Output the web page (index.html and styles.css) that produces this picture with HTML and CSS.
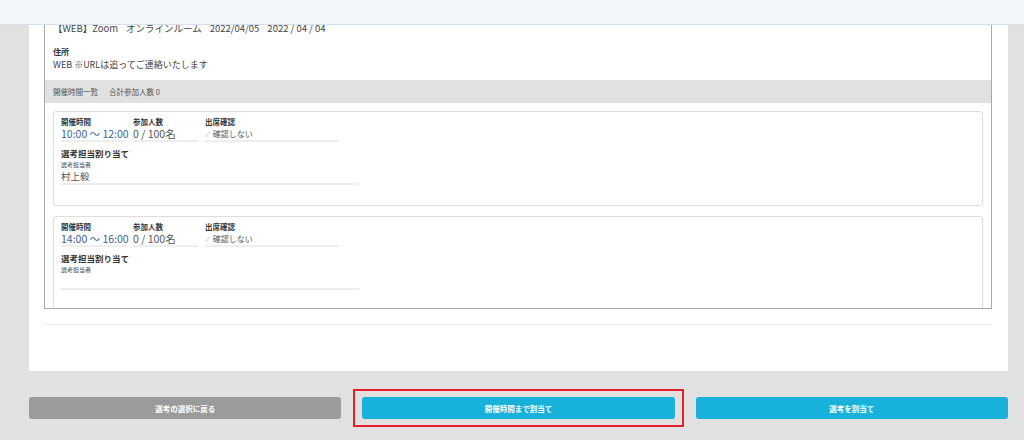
FILE: index.html
```html
<!DOCTYPE html>
<html lang="ja">
<head>
    <meta charset="UTF-8">
    <meta name="viewport" content="width=device-width, initial-scale=1.0">
    <title>選考担当割り当て</title>
    <link rel="stylesheet" href="styles.css">
</head>
<body>
    <!-- 固定ヘッダー -->
    <div class="topbar"></div>

    <div class="page">
        <div class="panel">
            <div class="scroll-box">
                <div class="info">
                    <p class="info-line info-head">
                        <span>【WEB】Zoom</span>
                        <span>オンラインルーム</span>
                        <span>2022/04/05</span>
                        <span>2022 / 04 / 04</span>
                    </p>
                    <p class="info-label">住所</p>
                    <p class="info-line">WEB ※URLは追ってご連絡いたします</p>
                </div>

                <div class="band">
                    <span>開催時間一覧</span>
                    <span>合計参加人数 0</span>
                </div>

                <div class="card-list">
                    <div class="card">
                        <div class="field-row">
                            <div class="field w-time">
                                <div class="label">開催時間</div>
                                <div class="value time">10:00 ～ 12:00</div>
                            </div>
                            <div class="field w-time">
                                <div class="label">参加人数</div>
                                <div class="value">0 / 100名</div>
                            </div>
                            <div class="field w-check">
                                <div class="label">出席確認</div>
                                <div class="value small"><span class="check">✓</span>確認しない</div>
                            </div>
                        </div>
                        <div class="assign-title">選考担当割り当て</div>
                        <div class="field w-assign">
                            <div class="sub-label">選考担当者</div>
                            <div class="value name">村上毅</div>
                        </div>
                    </div>

                    <div class="card">
                        <div class="field-row">
                            <div class="field w-time">
                                <div class="label">開催時間</div>
                                <div class="value time">14:00 ～ 16:00</div>
                            </div>
                            <div class="field w-time">
                                <div class="label">参加人数</div>
                                <div class="value">0 / 100名</div>
                            </div>
                            <div class="field w-check">
                                <div class="label">出席確認</div>
                                <div class="value small"><span class="check">✓</span>確認しない</div>
                            </div>
                        </div>
                        <div class="assign-title">選考担当割り当て</div>
                        <div class="field w-assign">
                            <div class="sub-label">選考担当者</div>
                            <div class="value name"></div>
                        </div>
                    </div>
                </div>
            </div>
            <div class="separator"></div>
        </div>

        <div class="actions">
            <button class="btn btn-gray">選考の選択に戻る</button>
            <div class="highlight">
                <button class="btn btn-blue">開催時間まで割当て</button>
            </div>
            <button class="btn btn-blue">選考を割当て</button>
        </div>
    </div>
</body>
</html>
```

FILE: styles.css
```css
/* 基本 */
body {
    margin: 0;
    background-color: #e1e1e1;
    font-family: "Noto Sans CJK JP", "Noto Sans", sans-serif;
    color: #444444;
}

p {
    margin: 0;
}

/* 固定ヘッダー */
.topbar {
    position: fixed;
    top: 0;
    left: 0;
    right: 0;
    height: 24px;
    background-color: #f1f7fb;
    border-bottom: 1px solid #d3dfec;
    z-index: 10;
}

.page {
    padding: 0 16px 21px 29px;
}

/* 白いパネル */
.panel {
    background-color: #ffffff;
    height: 371px;
    padding: 0 16px 0 15px;
    box-sizing: border-box;
}

.scroll-box {
    height: 309px;
    box-sizing: border-box;
    border: 1px solid #a9a9a9;
    border-top: none;
    overflow: hidden;
    padding-top: 20px;
}

.info {
    padding: 0 8px 7px;
}

.info-line {
    font-size: 9px;
    line-height: 16px;
    color: #444444;
}

.info-head {
    display: flex;
    gap: 8px;
    font-size: 9.5px;
}

.info-label {
    margin-top: 11px;
    font-size: 8px;
    line-height: 10px;
    font-weight: bold;
    color: #333333;
}

/* 開催時間一覧 */
.band {
    height: 23px;
    background-color: #e1e1e1;
    display: flex;
    align-items: center;
    gap: 11px;
    padding-left: 8px;
    font-size: 7.5px;
    color: #555555;
}

.card-list {
    padding: 8px 8px 0;
}

.card {
    border: 1px solid #dddddd;
    border-radius: 3px;
    padding: 5px 7px 20px;
    margin-bottom: 10px;
}

.field-row {
    display: flex;
    gap: 7px;
}

.field {
    border-bottom: 2px solid #eeeeee;
}

.w-time {
    width: 65px;
}

.w-check {
    width: 134px;
}

.w-assign {
    width: 298px;
}

.label {
    font-size: 7.5px;
    line-height: 10px;
    font-weight: bold;
    color: #333333;
}

.value {
    font-size: 10.5px;
    line-height: 13px;
    height: 13px;
    color: #555555;
    white-space: nowrap;
}

.value.time {
    color: #3d6394;
}

.value.small {
    font-size: 8px;
}

.check {
    color: #cccccc;
    font-size: 7px;
    margin-right: 3px;
}

.assign-title {
    margin-top: 6px;
    font-size: 8.5px;
    line-height: 10px;
    font-weight: bold;
    color: #333333;
}

.sub-label {
    margin-top: 3px;
    font-size: 6px;
    line-height: 8px;
    color: #444444;
}

.value.name {
    font-size: 9.5px;
    height: 14px;
    line-height: 14px;
}

.separator {
    margin-top: 15px;
    border-top: 1px solid #eeeeee;
}

/* ボタン */
.actions {
    display: flex;
    gap: 21px;
    padding-top: 26px;
}

.actions > * {
    flex: 1;
}

.btn {
    height: 22px;
    padding: 0;
    border: none;
    border-radius: 3px;
    color: #ffffff;
    font-family: "Noto Sans CJK JP", sans-serif;
    font-size: 7.5px;
    font-weight: bold;
    cursor: pointer;
}

.btn-gray {
    background-color: #9b9b9b;
}

.btn-blue {
    background-color: #17b1d9;
}

/* 赤い枠 */
.highlight {
    position: relative;
    display: flex;
}

.highlight .btn {
    flex: 1;
}

.highlight::after {
    content: "";
    position: absolute;
    top: -8px;
    bottom: -8px;
    left: -9px;
    right: -9px;
    border: 2px solid #e5202a;
}
```
